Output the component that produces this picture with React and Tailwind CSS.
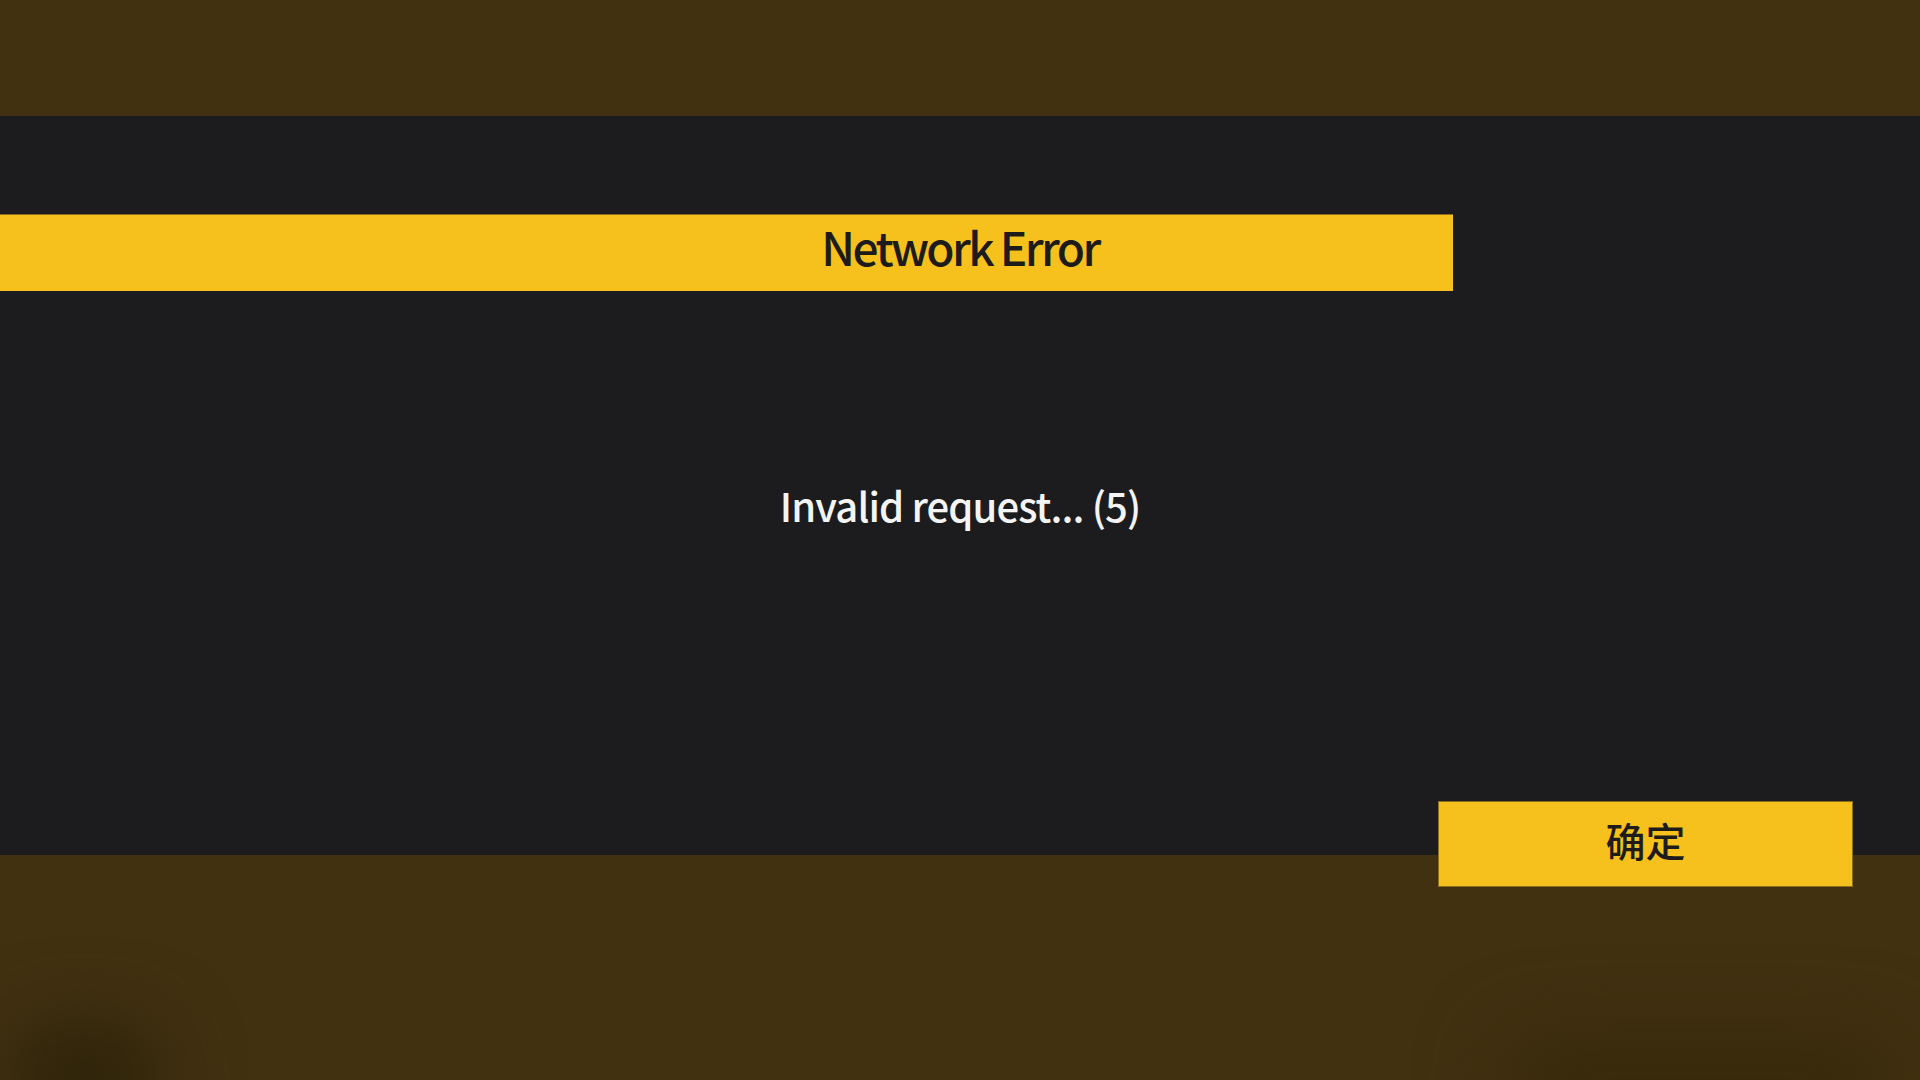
export default function App() {
  return (
    <div className="relative h-screen w-full overflow-hidden bg-[#413111] font-['Noto_Sans_CJK_SC','Noto_Sans',sans-serif]">
      {/* top band */}
      <div className="h-[116px]" />

      {/* dialog panel */}
      <div className="relative flex h-[739px] flex-col bg-[#1c1c1e]">
        <div className="mt-[98px] flex h-[77px] w-[1453px] items-center border-t border-[#8a6f1d] bg-[#f6c11c] pb-[14px]">
          <div className="w-[1920px] shrink-0 text-center text-[46px] font-medium leading-none tracking-[-2.6px] text-[#1e1c1a]">
            Network Error
          </div>
        </div>

        <div className="flex flex-1 items-start justify-center pt-[194px]">
          <p className="text-[40px] font-medium leading-none tracking-[-0.9px] text-[#f4f4f4]">Invalid request... (5)</p>
        </div>

        <div className="flex justify-end pr-[67px]">
          <button className="relative z-10 -mb-[32px] flex h-[86px] w-[415px] items-center justify-center border border-[#8a6f1d] bg-[#f6c11c] pb-[9px] text-[40px] font-medium leading-none text-[#1e1c1a]">
            确定
          </button>
        </div>
      </div>

      {/* blurred backdrop shapes */}
      <div className="pointer-events-none absolute bottom-[-40px] left-[10px] h-[90px] w-[150px] rounded-full bg-[#2a2008] blur-2xl" />
      <div className="pointer-events-none absolute bottom-[-40px] right-[20px] h-[80px] w-[400px] rounded-full bg-[#352809] blur-2xl" />
    </div>
  );
}
